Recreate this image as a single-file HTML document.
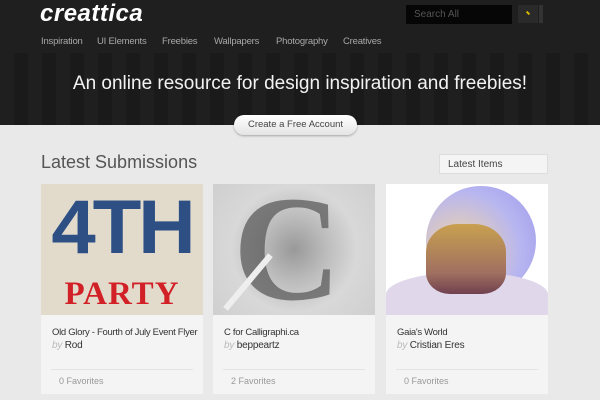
<!DOCTYPE html>
<html><head><style>
*{margin:0;padding:0;box-sizing:border-box}
body{width:600px;height:400px;overflow:hidden;background:#e9e9e9;font-family:"Liberation Sans",sans-serif;position:relative}
.hd{position:absolute;left:0;top:0;width:600px;height:53px;background:#1f1f1f}
.logo{position:absolute;left:40px;top:0px;color:#fff;font-size:24px;font-weight:bold;font-style:italic;letter-spacing:0.5px}
.nav{position:absolute;top:36px;font-size:9.5px;color:#a8a8a8;white-space:nowrap;letter-spacing:-0.2px}
.search{position:absolute;left:406px;top:5px;width:106px;height:19px;background:#060606;color:#555;font-size:10px;padding:4px 8px}
.sb{position:absolute;left:518px;top:5px;width:20px;height:18px;background:#2a2a2a}
.sb2{position:absolute;left:539px;top:5px;width:4px;height:18px;background:#333}
.hero{position:absolute;left:0;top:53px;width:600px;height:72px;background:#1c1c1c;background-image:repeating-linear-gradient(90deg,#1f1f1f 0 14px,#1a1a1a 14px 28px);}
.hero h1{position:absolute;left:0;width:600px;top:20px;text-align:center;color:#f2f2f2;font-weight:normal;font-size:19px;letter-spacing:0px}
.btn{position:absolute;left:234px;top:115px;width:123px;height:20px;border-radius:10px;background:linear-gradient(#fff,#e4e4e4);font-size:9.5px;color:#444;text-align:center;line-height:20px;box-shadow:0 1px 2px rgba(0,0,0,.3)}
h2{position:absolute;left:41px;top:152px;font-size:18px;font-weight:normal;color:#555}
.sel{position:absolute;left:439px;top:154px;width:109px;height:20px;background:#f4f4f4;border:1px solid #ddd;font-size:10px;color:#444;padding:4px 8px}
.card{position:absolute;top:184px;width:162px;height:210px;background:#f4f4f4}
.img{height:131px}
.t{position:absolute;left:11px;top:143px;font-size:9.5px;color:#333;white-space:nowrap;letter-spacing:-0.3px}
.by{position:absolute;left:11px;top:156px;font-size:10px;color:#333;letter-spacing:-0.2px}
.by i{color:#bbb}
.ln{position:absolute;left:10px;right:10px;top:185px;border-top:1px solid #e4e4e4}
.f{position:absolute;left:18px;top:192px;font-size:9px;color:#999}
</style></head><body>
<div class="hd">
<div class="logo">creattica</div>
<div class="nav" style="left:41px">Inspiration</div>
<div class="nav" style="left:97px">UI Elements</div>
<div class="nav" style="left:162px">Freebies</div>
<div class="nav" style="left:214px">Wallpapers</div>
<div class="nav" style="left:276px">Photography</div>
<div class="nav" style="left:343px">Creatives</div>
<div class="search">Search All</div>
<div class="sb"><div style="position:absolute;left:8px;top:7px;width:4px;height:2px;background:#d8b800;transform:rotate(45deg)"></div></div>
<div class="sb2"></div>
</div>
<div class="hero"><h1>An online resource for design inspiration and freebies!</h1></div>
<div class="btn">Create a Free Account</div>
<h2>Latest Submissions</h2>
<div class="sel">Latest Items</div>

<div class="card" style="left:41px">
<div class="img" style="background:#e2dbcc;position:relative;overflow:hidden">
<div style="position:absolute;left:-10px;top:6px;width:182px;text-align:center;font:bold 76px/76px 'Liberation Sans',sans-serif;color:#2d4f84;letter-spacing:-3px;transform:scaleX(1.05)">4TH</div>
<div style="position:absolute;left:-4px;top:93px;width:170px;text-align:center;font:bold 33px/34px 'Liberation Serif',serif;color:#d22027;letter-spacing:1px">PARTY</div>
</div>
<div class="t">Old Glory - Fourth of July Event Flyer</div>
<div class="by"><i>by</i> Rod</div><div class="ln"></div><div class="f">0 Favorites</div>
</div>

<div class="card" style="left:213px">
<div class="img" style="background:radial-gradient(circle at 50% 50%,#999 0,#bbb 30%,#d8d8d8 60%,#cfcfcf 100%);position:relative;overflow:hidden">
<div style="position:absolute;left:20px;top:0;font:bold 150px/130px 'Liberation Serif',serif;color:#555;opacity:.7">C</div>
<div style="position:absolute;left:0;top:95px;width:70px;height:6px;background:#eee;transform:rotate(-50deg)"></div>
</div>
<div class="t">C for Calligraphi.ca</div>
<div class="by"><i>by</i> beppeartz</div><div class="ln"></div><div class="f">2 Favorites</div>
</div>

<div class="card" style="left:386px">
<div class="img" style="background:#fff;position:relative;overflow:hidden">
<div style="position:absolute;left:40px;top:2px;width:110px;height:110px;border-radius:50%;background:radial-gradient(circle at 30% 60%,#f4d7a0,#b8b6f0 60%,#9c98ec)"></div>
<div style="position:absolute;left:0;top:88px;width:162px;height:45px;background:#e0d8ea;border-radius:50% 50% 0 0"></div>
<div style="position:absolute;left:40px;top:40px;width:80px;height:70px;border-radius:40% 40% 30% 30%;background:linear-gradient(#c9a050,#a07060 70%,#704050)"></div>
</div>
<div class="t">Gaia's World</div>
<div class="by"><i>by</i> Cristian Eres</div><div class="ln"></div><div class="f">0 Favorites</div>
</div>
</body></html>
